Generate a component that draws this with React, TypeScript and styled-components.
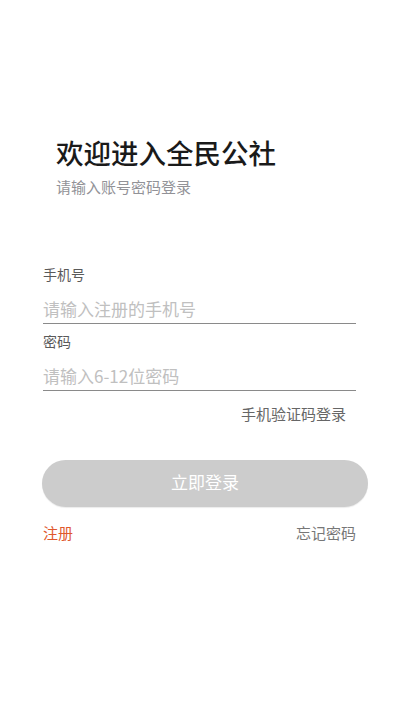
import React from 'react';
import styled, { createGlobalStyle } from 'styled-components';

const GlobalStyle = createGlobalStyle`
  html, body {
    margin: 0;
    padding: 0;
    background: #ffffff;
  }

  body {
    font-family: "Noto Sans CJK SC", "Noto Sans", sans-serif;
  }

  * {
    box-sizing: border-box;
  }
`;

const Page = styled.div`
  width: 400px;
  min-height: 711px;
  background: #ffffff;
  display: flex;
  flex-direction: column;
  padding-top: 134px;
`;

const Header = styled.div`
  display: flex;
  flex-direction: column;
  padding-left: 56px;
  gap: 7px;
`;

const Title = styled.div`
  font-size: 27.5px;
  line-height: 36px;
  font-weight: 500;
  color: #1a1a1a;
`;

const Subtitle = styled.div`
  font-size: 15px;
  line-height: 20px;
  color: #929297;
`;

const Form = styled.div`
  display: flex;
  flex-direction: column;
  padding-left: 43px;
  padding-right: 32px;
  margin-top: 67px;
`;

const Field = styled.div<{ $first?: boolean }>`
  display: flex;
  flex-direction: column;
  width: 313px;
  margin-top: ${(p) => (p.$first ? 0 : 7)}px;
`;

const Label = styled.div`
  font-size: 14px;
  line-height: 20px;
  color: #5a5a5a;
`;

const Input = styled.input`
  margin-top: 13px;
  height: 27px;
  padding: 0 0 3px 0;
  border: none;
  border-bottom: 1px solid #8a8a8a;
  outline: none;
  background: transparent;
  font-family: inherit;
  font-size: 17px;
  color: #333333;

  &::placeholder {
    color: #c0c0c0;
  }
`;

const SwitchRow = styled.div`
  display: flex;
  justify-content: flex-end;
  width: 313px;
  padding-right: 10px;
  margin-top: 13px;
`;

const TextLink = styled.span<{ $color?: string }>`
  font-size: 15px;
  line-height: 20px;
  color: ${(p) => p.$color || '#666666'};
  cursor: pointer;
`;

const SubmitButton = styled.button`
  margin-top: 36px;
  margin-left: -1px;
  width: 326px;
  height: 47px;
  padding: 0 0 5px 0;
  border: none;
  border-radius: 24px;
  background: #cccccc;
  box-shadow: 0 1px 1px rgba(0, 0, 0, 0.08);
  color: #ffffff;
  font-family: inherit;
  font-size: 17px;
  cursor: pointer;
`;

const BottomRow = styled.div`
  display: flex;
  justify-content: space-between;
  width: 313px;
  margin-top: 16px;
`;

const App = () => {

  return (
    <>
      <GlobalStyle />
      <Page>
        <Header>
          <Title>欢迎进入全民公社</Title>
          <Subtitle>请输入账号密码登录</Subtitle>
        </Header>

        <Form>
          <Field $first>
            <Label>手机号</Label>
            <Input type="tel" placeholder="请输入注册的手机号" />
          </Field>

          <Field>
            <Label>密码</Label>
            <Input type="password" placeholder="请输入6-12位密码" />
          </Field>

          <SwitchRow>
            <TextLink>手机验证码登录</TextLink>
          </SwitchRow>

          <SubmitButton>立即登录</SubmitButton>

          <BottomRow>
            <TextLink $color="#e0582c">注册</TextLink>
            <TextLink $color="#777777">忘记密码</TextLink>
          </BottomRow>
        </Form>
      </Page>
    </>
  );
};

export default App;
